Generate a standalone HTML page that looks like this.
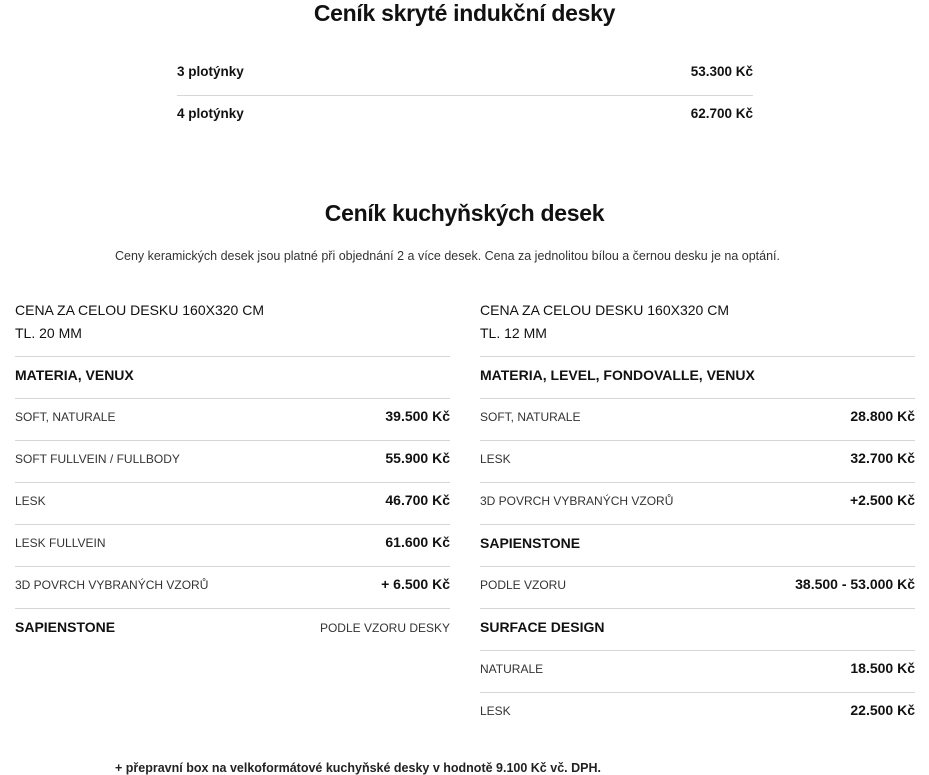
<!DOCTYPE html>
<html><head><meta charset="utf-8"><style>
body{margin:0;width:929px;height:774px;background:#fff;font-family:"Liberation Sans",Arial,sans-serif;color:#111;position:relative;overflow:hidden}
.a{position:absolute;white-space:nowrap}
h1{position:absolute;margin:0;left:0;width:929px;text-align:center;font-size:23px;font-weight:bold;letter-spacing:-0.3px;color:#111}
.ln{position:absolute;height:1px;background:#d6d6d6}
.r{text-align:right}
.b{font-weight:bold;font-size:14px}
.s{font-size:12px;color:#333;margin-top:1px}
.c{font-size:14px;color:#111}
</style></head><body>
<h1 style="top:0">Ceník skryté indukční desky</h1>
<div class="a b" style="left:177px;top:64px;font-size:13.5px">3 plotýnky</div>
<div class="a b r" style="right:176px;top:64px;font-size:13.5px">53.300 Kč</div>
<div class="ln" style="left:177px;width:576px;top:95px"></div>
<div class="a b" style="left:177px;top:106px;font-size:13.5px">4 plotýnky</div>
<div class="a b r" style="right:176px;top:106px;font-size:13.5px">62.700 Kč</div>

<h1 style="top:200px">Ceník kuchyňských desek</h1>
<div class="a" style="left:115px;top:249px;font-size:12.5px;color:#333">Ceny keramických desek jsou platné při objednání 2 a více desek. Cena za jednolitou bílou a černou desku je na optání.</div>

<!-- left -->
<div class="a c" style="left:15px;top:302px">CENA ZA CELOU DESKU 160X320 CM</div>
<div class="a c" style="left:15px;top:325px">TL. 20 MM</div>
<div class="ln" style="left:15px;width:435px;top:356px"></div>
<div class="a b" style="left:15px;top:367px">MATERIA, VENUX</div>
<div class="ln" style="left:15px;width:435px;top:398px"></div>
<div class="a s" style="left:15px;top:409px">SOFT, NATURALE</div>
<div class="a b r" style="right:479px;top:408px">39.500 Kč</div>
<div class="ln" style="left:15px;width:435px;top:440px"></div>
<div class="a s" style="left:15px;top:451px">SOFT FULLVEIN / FULLBODY</div>
<div class="a b r" style="right:479px;top:450px">55.900 Kč</div>
<div class="ln" style="left:15px;width:435px;top:482px"></div>
<div class="a s" style="left:15px;top:493px">LESK</div>
<div class="a b r" style="right:479px;top:492px">46.700 Kč</div>
<div class="ln" style="left:15px;width:435px;top:524px"></div>
<div class="a s" style="left:15px;top:535px">LESK FULLVEIN</div>
<div class="a b r" style="right:479px;top:534px">61.600 Kč</div>
<div class="ln" style="left:15px;width:435px;top:566px"></div>
<div class="a s" style="left:15px;top:577px">3D POVRCH VYBRANÝCH VZORŮ</div>
<div class="a b r" style="right:479px;top:576px">+ 6.500 Kč</div>
<div class="ln" style="left:15px;width:435px;top:608px"></div>
<div class="a b" style="left:15px;top:619px">SAPIENSTONE</div>
<div class="a s r" style="right:479px;top:620px">PODLE VZORU DESKY</div>

<!-- right -->
<div class="a c" style="left:480px;top:302px">CENA ZA CELOU DESKU 160X320 CM</div>
<div class="a c" style="left:480px;top:325px">TL. 12 MM</div>
<div class="ln" style="left:480px;width:435px;top:356px"></div>
<div class="a b" style="left:480px;top:367px">MATERIA, LEVEL, FONDOVALLE, VENUX</div>
<div class="ln" style="left:480px;width:435px;top:398px"></div>
<div class="a s" style="left:480px;top:409px">SOFT, NATURALE</div>
<div class="a b r" style="right:14px;top:408px">28.800 Kč</div>
<div class="ln" style="left:480px;width:435px;top:440px"></div>
<div class="a s" style="left:480px;top:451px">LESK</div>
<div class="a b r" style="right:14px;top:450px">32.700 Kč</div>
<div class="ln" style="left:480px;width:435px;top:482px"></div>
<div class="a s" style="left:480px;top:493px">3D POVRCH VYBRANÝCH VZORŮ</div>
<div class="a b r" style="right:14px;top:492px">+2.500 Kč</div>
<div class="ln" style="left:480px;width:435px;top:524px"></div>
<div class="a b" style="left:480px;top:535px">SAPIENSTONE</div>
<div class="ln" style="left:480px;width:435px;top:566px"></div>
<div class="a s" style="left:480px;top:577px">PODLE VZORU</div>
<div class="a b r" style="right:14px;top:576px">38.500 - 53.000 Kč</div>
<div class="ln" style="left:480px;width:435px;top:608px"></div>
<div class="a b" style="left:480px;top:619px">SURFACE DESIGN</div>
<div class="ln" style="left:480px;width:435px;top:650px"></div>
<div class="a s" style="left:480px;top:661px">NATURALE</div>
<div class="a b r" style="right:14px;top:660px">18.500 Kč</div>
<div class="ln" style="left:480px;width:435px;top:692px"></div>
<div class="a s" style="left:480px;top:703px">LESK</div>
<div class="a b r" style="right:14px;top:702px">22.500 Kč</div>

<div class="a" style="left:115px;top:761px;font-size:12.5px;font-weight:bold;color:#222">+ přepravní box na velkoformátové kuchyňské desky v hodnotě 9.100 Kč vč. DPH.</div>
</body></html>
